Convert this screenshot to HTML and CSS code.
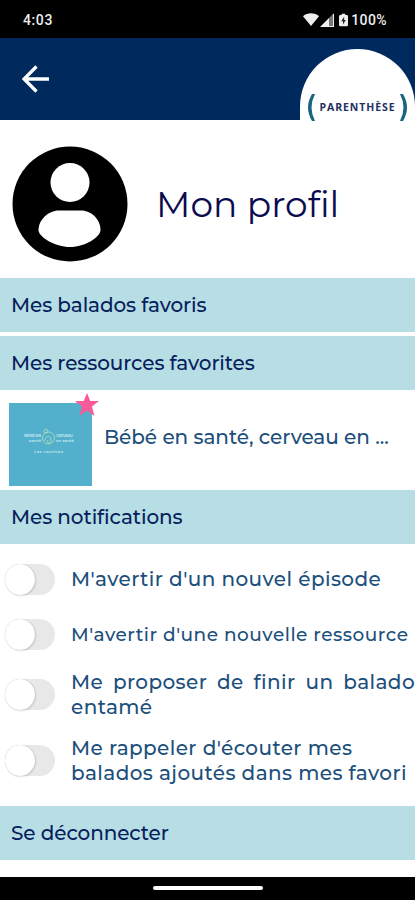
FILE: index.html
```html
<!DOCTYPE html>
<html lang="fr">
<head>
  <meta charset="UTF-8" />
  <meta name="viewport" content="width=device-width, initial-scale=1.0"/>
  <title>Mon profil</title>
  <link rel="stylesheet" href="styles.css">
</head>
<body>

  <div class="status-bar">
    <span class="time">4:03</span>
    <div class="status-icons">
      <svg class="wifi" viewBox="0 0 16 13">
        <path d="M0 3.200C4.500-.6 11.500-.6 16 3.200L8 13z"/>
      </svg>
      <svg class="signal" viewBox="0 0 14 14">
        <path class="weak" d="M14 0v14H8V6z"/>
        <path d="M9 5v9H0z"/>
        <path d="M13 1h1v13H8v-1h5z"/>
      </svg>
      <svg class="battery" viewBox="0 0 10 14">
        <path d="M3 0h4v1.500h1.500Q10 1.500 10 3v9.500Q10 14 8.500 14h-7Q0 14 0 12.500V3q0-1.500 1.500-1.500H3z"/>
        <path class="bolt" d="M5.700 3.500L2.500 8.500h2v3.500l3-5h-1.800z"/>
      </svg>
      <span class="percent">100%</span>
    </div>
  </div>

  <header>
    <svg class="back" viewBox="0 0 28 28">
      <path d="M27 14H2M14.500 1.500L2 14l12.500 12.500"/>
    </svg>
    <div class="logo">
      <div class="logo-name">
        <svg class="paren" viewBox="0 0 7 27"><path d="M7 0Q0 13.500 7 27H4Q-4 13.500 4 0z"/></svg>
        <span>PARENTHÈSE</span>
        <svg class="paren" viewBox="0 0 7 27"><path d="M0 0Q7 13.500 0 27H3Q11 13.500 3 0z"/></svg>
      </div>
    </div>
  </header>

  <main>
    <section class="profile">
      <svg class="avatar" viewBox="0 0 116 116">
        <circle cx="58" cy="58" r="57.500"/>
        <circle class="shape" cx="58" cy="36.500" r="19.500"/>
        <path class="shape" d="M47 64.500H69C80 64.500 88.500 74 88.500 84C88.500 91 73 101 58 101S26.500 91 26.500 84C26.500 74 36 64.500 47 64.500z"/>
      </svg>
      <h1>Mon profil</h1>
    </section>

    <h2 class="bar podcasts">Mes balados favoris</h2>
    <h2 class="bar resources">Mes ressources favorites</h2>

    <div class="resource">
      <div class="thumb">
        <svg class="cover" viewBox="0 0 83 83">
          <text x="15" y="34" textLength="17">BÉBÉ EN</text>
          <text x="20" y="38.500" textLength="12">santé</text>
          <text x="47" y="34" textLength="17">CERVEAU</text>
          <text x="47" y="38.500" textLength="18">en santé</text>
          <text x="25" y="49.500" textLength="29">Les routines</text>
          <circle cx="39.500" cy="35" r="6"/>
          <circle cx="37" cy="28" r="2"/>
          <path d="M36 38c0-6 6-6 6-1s-5 3-3 0"/>
        </svg>
        <svg class="star" viewBox="0 0 24 23">
          <path d="M12 0l3.300 8H24l-7 5.500L19.500 23 12 17.500 4.500 23 7 13.500 0 8h8.700z"/>
        </svg>
      </div>
      <span class="resource-name">Bébé en santé, cerveau en ...</span>
    </div>

    <h2 class="bar notifs">Mes notifications</h2>

    <div class="settings">
      <div class="setting">
        <div class="toggle"></div>
        <div class="label"><span class="line">M'avertir d'un nouvel épisode</span></div>
      </div>
      <div class="setting">
        <div class="toggle"></div>
        <div class="label"><span class="line small">M'avertir d'une nouvelle ressource</span></div>
      </div>
      <div class="setting">
        <div class="toggle"></div>
        <div class="label">
          <span class="line justified">Me proposer de finir un balado</span>
          <span class="line">entamé</span>
        </div>
      </div>
      <div class="setting">
        <div class="toggle"></div>
        <div class="label">
          <span class="line">Me rappeler d'écouter mes</span>
          <span class="line">balados ajoutés dans mes favori</span>
        </div>
      </div>
    </div>

    <h2 class="bar logout">Se déconnecter</h2>
  </main>

  <div class="nav-bar"><div class="handle"></div></div>

</body>
</html>
```
FILE: styles.css
```css
:root {
  --navy: #002a5e;
  --title: #0b0b50;
  --text: #1c4f7c;
  --light-blue: #b6dee4;
  --font-main: Montserrat, Inter, sans-serif;
}

* {
  margin: 0;
  padding: 0;
  box-sizing: border-box;
}

body {
  width: 415px;
  height: 900px;
  display: flex;
  flex-direction: column;
  overflow: hidden;
  background: white;
  font-family: var(--font-main);
  font-variant-ligatures: none;
  color: var(--text);
}

svg {
  display: block;
  flex: none;
}

/* Status bar */
.status-bar {
  height: 38px;
  padding: 1px 28px 0 23px;
  display: flex;
  align-items: center;
  justify-content: space-between;
  background: black;
  color: #eee;
  font-family: Roboto, sans-serif;
  font-size: 14px;
  font-weight: 500;
}

.time {
  letter-spacing: 0.6px;
}

.percent {
  letter-spacing: 0.4px;
}

.status-icons {
  display: flex;
  align-items: center;
  fill: #eee;
}

.wifi {
  width: 16px;
  height: 13px;
}

.signal {
  width: 14px;
  height: 14px;
  margin-left: 1px;
}

.weak {
  fill: #777;
}

.battery {
  width: 9px;
  height: 14px;
  margin: 0 3px 0 5px;
}

.bolt {
  fill: #222;
}

/* Header */
header {
  height: 82px;
  padding-left: 22px;
  display: flex;
  align-items: center;
  justify-content: space-between;
  background: var(--navy);
}

.back {
  width: 28px;
  height: 28px;
  fill: none;
  stroke: white;
  stroke-width: 3.3;
}

.logo {
  align-self: flex-end;
  width: 115px;
  height: 71px;
  padding-top: 45px;
  border-radius: 58px 58px 0 0 / 58px 58px 0 0;
  background: white;
}

.logo-name {
  display: flex;
  align-items: center;
  justify-content: center;
  gap: 5px;
  color: #25305f;
  font-family: "Open Sans", sans-serif;
  font-size: 10.5px;
  font-weight: 700;
  line-height: 24px;
  letter-spacing: 0.9px;
}

.logo-name span {
  padding-bottom: 2px;
}

.paren {
  width: 7px;
  height: 27px;
  fill: #17657f;
}

/* Profile */
main {
  flex: 1;
}

.profile {
  height: 158px;
  padding: 9px 0 0 12px;
  display: flex;
  align-items: center;
  gap: 28px;
}

.avatar {
  width: 116px;
  height: 116px;
}

.shape {
  fill: white;
}

h1 {
  padding-top: 1px;
  color: var(--title);
  font-size: 36px;
  font-weight: 400;
}

.bar {
  height: 54px;
  padding-left: 11px;
  background: var(--light-blue);
  color: #06205c;
  font-size: 20px;
  font-weight: 500;
  line-height: 54px;
  letter-spacing: -0.1px;
  white-space: nowrap;
}

.resources {
  margin-top: 4px;
}

/* Favorite resource */
.resource {
  height: 100px;
  padding: 13px 0 0 9px;
  display: flex;
  gap: 12px;
}

.thumb {
  position: relative;
  width: 83px;
  height: 83px;
  background: #52b0cd;
}

.cover {
  width: 83px;
  height: 83px;
  fill: none;
  stroke: #b4dfb8;
  stroke-width: 0.8;
}

.cover text {
  fill: #c5e6ee;
  stroke: none;
  font-size: 4px;
  font-weight: 600;
}

.star {
  position: absolute;
  top: -10px;
  right: -7px;
  width: 24px;
  height: 23px;
  fill: #f95b9a;
}

.resource-name {
  font-size: 20px;
  font-weight: 500;
  line-height: 68px;
  letter-spacing: -0.05px;
  white-space: nowrap;
}

/* Notifications */
.settings {
  height: 262px;
  padding-top: 8px;
}

.setting {
  min-height: 55px;
  padding: 8px 0 8px 5px;
  display: flex;
  align-items: center;
  gap: 16px;
}

.toggle {
  flex: none;
  width: 50px;
  height: 31px;
  margin-bottom: 1px;
  border-radius: 16px;
  background: #e8e8e8;
}

.toggle::before {
  content: "";
  display: block;
  width: 30px;
  height: 31px;
  border-radius: 50%;
  background: white;
  box-shadow: 0 0 1px 0 rgba(0,0,0,0.25), 1px 1px 2px rgba(0,0,0,0.12);
}

.label {
  width: 344px;
  font-size: 20px;
  font-weight: 500;
  line-height: 25px;
}

.line {
  display: block;
  letter-spacing: 0.4px;
  white-space: nowrap;
}

.small {
  font-size: 18.5px;
  letter-spacing: 0.5px;
}

.justified {
  white-space: normal;
  text-align-last: justify;
}

/* Navigation bar */
.nav-bar {
  height: 23px;
  display: flex;
  justify-content: center;
  padding-top: 9px;
  background: black;
}

.handle {
  width: 110px;
  height: 4px;
  border-radius: 2px;
  background: white;
}
```
